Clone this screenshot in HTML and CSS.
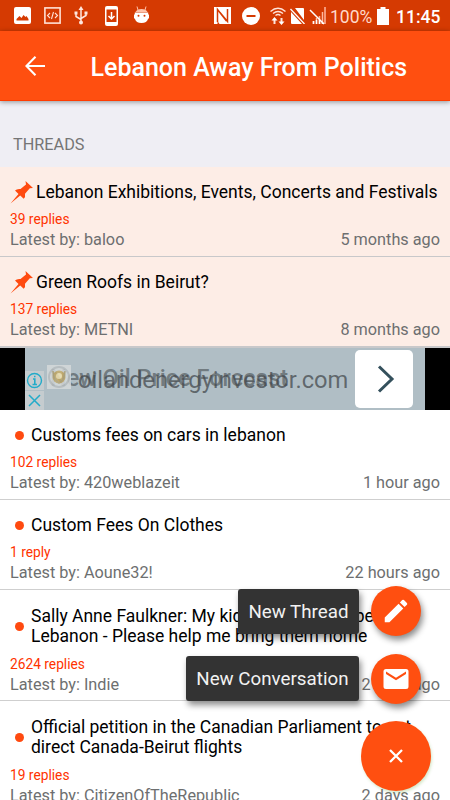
FILE: index.html
```html
<!DOCTYPE html>
<html lang="en">
<head>
<meta charset="utf-8">
<title>Lebanon Away From Politics</title>
<link rel="stylesheet" href="styles.css">
</head>
<body>
<div class="screen">
  <div class="statusbar">
    <div class="status-left">
      <svg width="17" height="17" viewBox="0 0 17 17"><rect width="17" height="17" rx="2" fill="#fff"/><path d="M2.500 13.500V12l3-3 2 2 2-3 2 2 1-1 2 3v1.500z" fill="#d53a02"/></svg>
      <svg width="17" height="17" viewBox="0 0 17 17" fill="none" stroke="#ffe0d4"><rect x=".9" y=".9" width="15.200" height="15.200" stroke-width="1.600"/><path d="M6 6 3.500 8.500 6 11M11 6l2.500 2.500L11 11M9.500 5l-2 7" stroke-width="1.100"/></svg>
      <svg width="14" height="19" viewBox="0 0 14 19" fill="none" stroke="#ffe7df" stroke-width="1.500"><path d="M7 3v13M2 7v3.500l5 3M12 6v3.500l-5 3"/><path d="m7 0 2.500 4h-5zM.5 5.500h3v3h-3zM10.500 5.500h3v3h-3z" fill="#ffe7df" stroke="none"/><circle cx="7" cy="16.500" r="2" fill="#ffe7df" stroke="none"/></svg>
      <svg width="13" height="20" viewBox="0 0 13 20"><rect width="13" height="20" rx="2" fill="#fff"/><path d="M1.500 3.500h10v12.500h-10z" fill="#d53a02"/><path d="M6.500 6v7M3.500 10l3 3 3-3" fill="none" stroke="#fff" stroke-width="1.500"/></svg>
      <svg width="15" height="18" viewBox="0 0 15 18"><path d="M3 .5 4 4M12 .5 11 4" stroke="#ffc2aa"/><path d="M1.500 6Q3 3 7.500 3t6 3z" fill="#ffc2aa"/><path d="M0 8.500h.8V6.500h13.400v2h.8v4h-.8Q13 17 7.500 17T.8 12.500H0z" fill="#fff"/><circle cx="4.500" cy="9.700" r="1" fill="#d53a02"/><circle cx="10.500" cy="9.700" r="1" fill="#d53a02"/></svg>
    </div>
    <div class="status-right">
      <svg class="nfc" width="17" height="17" viewBox="0 0 17 17"><path d="M0 0h17v17H0z" fill="#fff"/><path d="M3.500 15V2.500l9 11.500M13.500 2v12.500L6 5.500" fill="none" stroke="#d53a02" stroke-width="1.500"/><path d="M3.500 17V14l2 3z" fill="#d53a02"/></svg>
      <svg class="dnd" width="18" height="18" viewBox="0 0 18 18"><circle cx="9" cy="9" r="9" fill="#fff"/><path d="M4.500 9h9" stroke="#d53a02" stroke-width="2"/></svg>
      <svg class="wifi" width="16" height="18" viewBox="0 0 16 18" fill="none" stroke="#ffe3d9" stroke-width="1.400"><path d="M.5 4.500Q8-2 15.500 4.500M3 6.500q5-4 10 0M5.500 8.500q2.500-2 5 0"/><path d="M4.500 17v-4M11.500 11v4" stroke-width="2"/><path d="m4.500 10 3 3.500h-6zM11.500 18l3-3.500h-6z" fill="#fff" stroke="none"/></svg>
      <svg class="sim" width="15" height="16" viewBox="0 0 15 16"><path d="M5 0h8q1 0 1 1v11zM1 4v11q0 1 1 1h10z" fill="#fff"/><path d="m.5 1 14 15" stroke="#fff" stroke-width="1.300"/></svg>
      <svg class="signal" width="17" height="18" viewBox="0 0 17 18"><path d="M4.500 17v-3M7.500 17v-6M10.500 17V9M13.500 17V5M16 17V0" stroke="#ffb79e" stroke-width="1.500"/><path d="M4.500 17v-3M7.500 17v-4M10.500 17v-4M13.500 17v-2" stroke="#fff" stroke-width="1.500"/><path d="m1 3 14 14" stroke="#fff" stroke-width="1.500"/></svg>
      <span class="percent">100%</span>
      <svg class="battery" width="12" height="18" viewBox="0 0 12 18"><path d="M3.500 0h5v2H12v16H0V2h3.500z" fill="#fff"/></svg>
      <span class="clock">11:45</span>
    </div>
  </div>
  <header class="appbar">
    <svg class="back" width="20" height="20" viewBox="0 0 20 20" fill="none" stroke="#fff" stroke-width="2.100"><path d="M20 10H1.500M10.500.8 1.400 10l9.100 9.200"/></svg>
    <h1>Lebanon Away From Politics</h1>
  </header>
  <div class="section">THREADS</div>

  <article class="thread pinned">
    <div class="head">
      <svg class="pin" width="24" height="24" viewBox="0 0 24 24"><path d="M.5 23.500 8.500 14 5 10.500Q7 8.500 10.500 9L16 4.500 15.500 1 23 8l-3.200.2-4.800 5.600q.7 3.500-1.300 4.900l-3.500-3.200z" fill="#ff4a10"/></svg>
      <h2>Lebanon Exhibitions, Events, Concerts and Festivals</h2>
    </div>
    <div class="replies">39 replies</div>
    <div class="meta"><span>Latest by: baloo</span><span>5 months ago</span></div>
  </article>
  <article class="thread pinned">
    <div class="head">
      <svg class="pin" width="24" height="24" viewBox="0 0 24 24"><path d="M.5 23.500 8.500 14 5 10.500Q7 8.500 10.500 9L16 4.500 15.500 1 23 8l-3.200.2-4.800 5.600q.7 3.500-1.300 4.900l-3.500-3.200z" fill="#ff4a10"/></svg>
      <h2>Green Roofs in Beirut?</h2>
    </div>
    <div class="replies">137 replies</div>
    <div class="meta"><span>Latest by: METNI</span><span>8 months ago</span></div>
  </article>

  <div class="ad">
    <div class="ad-body">
      <span class="ad-title">New Oil Price Forecast</span>
      <span class="ad-url">oilandenergyinvestor.com</span>
      <svg class="ad-logo" width="24" height="24" viewBox="0 0 24 24"><rect width="24" height="24" fill="#d5dadb"/><circle cx="12" cy="12" r="10" fill="none" stroke="#b9bfc1" stroke-width="2"/><circle cx="12" cy="12" r="6.500" fill="#c6ad6b"/><path d="M6 6q0 8 6 12 6-4 6-12" fill="none" stroke="#b3a57a" stroke-width="1.500"/><circle cx="12" cy="11" r="3" fill="#f1e2b0"/></svg>
      <div class="ad-tools">
        <svg width="19" height="19" viewBox="0 0 19 19" fill="none" stroke="#22abc9" stroke-width="1.400"><circle cx="9.500" cy="9.500" r="7"/><path d="M8 8h1.800v5M7.500 13.500h4.500M9 5.500h1.500" stroke-width="1.600"/></svg>
        <svg width="19" height="19" viewBox="0 0 19 19" fill="none" stroke="#22abc9" stroke-width="1.500"><path d="m4 4 11 11M15 4 4 15"/></svg>
      </div>
      <div class="ad-go"><svg width="18" height="28" viewBox="0 0 18 28" fill="none" stroke="#34505c" stroke-width="3"><path d="m2 1.500 13 12.500L2 26.500"/></svg></div>
    </div>
  </div>

  <article class="thread">
    <div class="head"><i class="dot"></i><h2>Customs fees on cars in lebanon</h2></div>
    <div class="replies">102 replies</div>
    <div class="meta"><span>Latest by: 420weblazeit</span><span>1 hour ago</span></div>
  </article>
  <article class="thread">
    <div class="head"><i class="dot"></i><h2>Custom Fees On Clothes</h2></div>
    <div class="replies">1 reply</div>
    <div class="meta"><span>Latest by: Aoune32!</span><span>22 hours ago</span></div>
  </article>
  <article class="thread two-line">
    <div class="head"><i class="dot"></i><h2>Sally Anne Faulkner: My kids have always been<br>Lebanon - Please help me bring them home</h2></div>
    <div class="replies">2624 replies</div>
    <div class="meta"><span>Latest by: Indie</span><span>2 days ago</span></div>
  </article>
  <article class="thread two-line">
    <div class="head"><i class="dot"></i><h2>Official petition in the Canadian Parliament to get<br>direct Canada-Beirut flights</h2></div>
    <div class="replies">19 replies</div>
    <div class="meta"><span>Latest by: CitizenOfTheRepublic</span><span>2 days ago</span></div>
  </article>

  <div class="fab-menu">
    <div class="action">
      <span class="label">New Thread</span>
      <button class="mini"><svg width="30" height="30" viewBox="0 0 24 24" fill="#fff"><path d="M3 17.250V21h3.750L17.810 9.940l-3.750-3.750zM20.710 7.040a1 1 0 0 0 0-1.410l-2.340-2.340a1 1 0 0 0-1.410 0l-1.830 1.830 3.750 3.750z"/></svg></button>
    </div>
    <div class="action">
      <span class="label">New Conversation</span>
      <button class="mini"><svg width="30" height="30" viewBox="0 0 24 24" fill="#fff"><path d="M20 4H4a2 2 0 0 0-2 2v12a2 2 0 0 0 2 2h16a2 2 0 0 0 2-2V6a2 2 0 0 0-2-2zm0 4-8 5-8-5V6l8 5 8-5z"/></svg></button>
    </div>
    <button class="fab"><svg width="14" height="14" viewBox="0 0 14 14" stroke="#fff" stroke-width="2.300"><path d="m1 1 12 12M13 1 1 13"/></svg></button>
  </div>
</div>
</body>
</html>
```
FILE: styles.css
```css
* { box-sizing: border-box; }
body { margin: 0; background: #fff; font-family: Roboto, sans-serif; overflow: hidden; }
h1, h2 { margin: 0; font-weight: 400; }
svg { display: block; flex: none; }
button { border: 0; padding: 0; display: flex; align-items: center; justify-content: center; background: #ff4f10; border-radius: 50%; }
.screen { position: relative; width: 450px; height: 800px; overflow: hidden; }

.statusbar { height: 31px; background: #d53a02; display: flex; justify-content: space-between; padding: 0 10px 0 14px; color: #fff; }
.status-left, .status-right { display: flex; align-items: center; }
.status-left { gap: 13px; }
.status-left svg:nth-child(4) { margin-left: 4px; }
.status-left svg:nth-child(5) { margin-left: 3px; margin-top: -2px; }
.nfc { margin-right: 1px; }
.dnd { margin-left: 10px; }
.wifi { margin-left: 10px; }
.sim { margin-left: 4px; }
.signal { margin-left: 4px; }
.percent { width: 42px; margin-left: 4px; font-size: 17.500px; color: #ffd9cb; white-space: nowrap; padding-top: 2px; }
.battery { margin-left: 5px; }
.clock { width: 44px; margin-left: 7px; font-size: 17.500px; font-weight: 500; white-space: nowrap; padding-top: 2px; }

.appbar { position: relative; z-index: 1; height: 70px; background: #ff4f10; border-bottom: 1px solid #ff3b00; box-shadow: 0 1px 5px rgba(0,0,0,.4); display: flex; align-items: center; gap: 45.500px; padding: 4px 0 0 25px; color: #fff; }
.back { margin-top: -4px; }
.appbar h1 { font-size: 25px; font-weight: 500; white-space: nowrap; }

.section { height: 66px; background: #efeef4; color: #757575; font-size: 16.250px; line-height: 20px; padding: 34px 0 0 13px; }

.thread { border-bottom: 1px solid #cfcfcf; padding: 15px 10px 6px; background: #fff; }
.pinned { background: #fdede6; border-color: #c8c8ca; }
.two-line { padding-top: 16px; }
.head { display: flex; align-items: center; margin-bottom: 9px; }
.head h2 { font-size: 17.500px; line-height: 20px; color: #000; white-space: nowrap; }
.pin { margin: -3px 2px -3px 0; }
.dot { flex: none; width: 9px; height: 9px; border-radius: 50%; background: #ff4a10; margin: 0 7px 0 5px; }
.replies { font-size: 13.750px; line-height: 17px; color: #ff3300; }
.two-line .head { margin-bottom: 10px; }
.two-line .meta { margin-bottom: -1px; }
.meta { display: flex; justify-content: space-between; font-size: 16.250px; line-height: 20px; margin-top: 2px; color: #6d6f70; white-space: nowrap; }

.ad { height: 63px; background: #000; border-top: 1px solid #c8c8ca; padding: 0 25px; }
.ad-body { position: relative; height: 62px; background: #b0bec5; }
.ad-title, .ad-url { position: absolute; white-space: nowrap; line-height: 26px; }
.ad-title { left: 25px; top: 17px; font-size: 23.500px; font-weight: 500; color: rgba(70,78,82,.62); }
.ad-url { left: 53px; top: 19px; font-size: 23.700px; color: rgba(65,70,74,.72); }
.ad-logo { position: absolute; left: 22px; top: 17px; opacity: .85; }
.ad-tools { position: absolute; left: 0; top: 23px; display: grid; gap: 1px; }
.ad-tools svg { background: #c5cccf; }
.ad-go { position: absolute; left: 330px; top: 2px; width: 58px; height: 58px; border-radius: 5px; background: #fff; display: flex; align-items: center; justify-content: center; padding-left: 4px; }

.fab-menu { position: absolute; right: 19px; top: 586px; z-index: 2; display: flex; flex-direction: column; align-items: flex-end; gap: 17.500px; }
.action { display: flex; align-items: center; gap: 12.500px; height: 50px; padding-right: 10px; }
.label { background: #333; color: #f2f2f2; border-radius: 3px; height: 45px; line-height: 46px; padding: 0 10px; font-size: 18.750px; white-space: nowrap; box-shadow: 2px 4px 6px rgba(0,0,0,.45); }
.mini { width: 50px; height: 50px; box-shadow: 2px 4px 6px rgba(0,0,0,.45); }
.fab { width: 70px; height: 70px; box-shadow: 1px 2px 3px rgba(120,180,80,.3); }
```
